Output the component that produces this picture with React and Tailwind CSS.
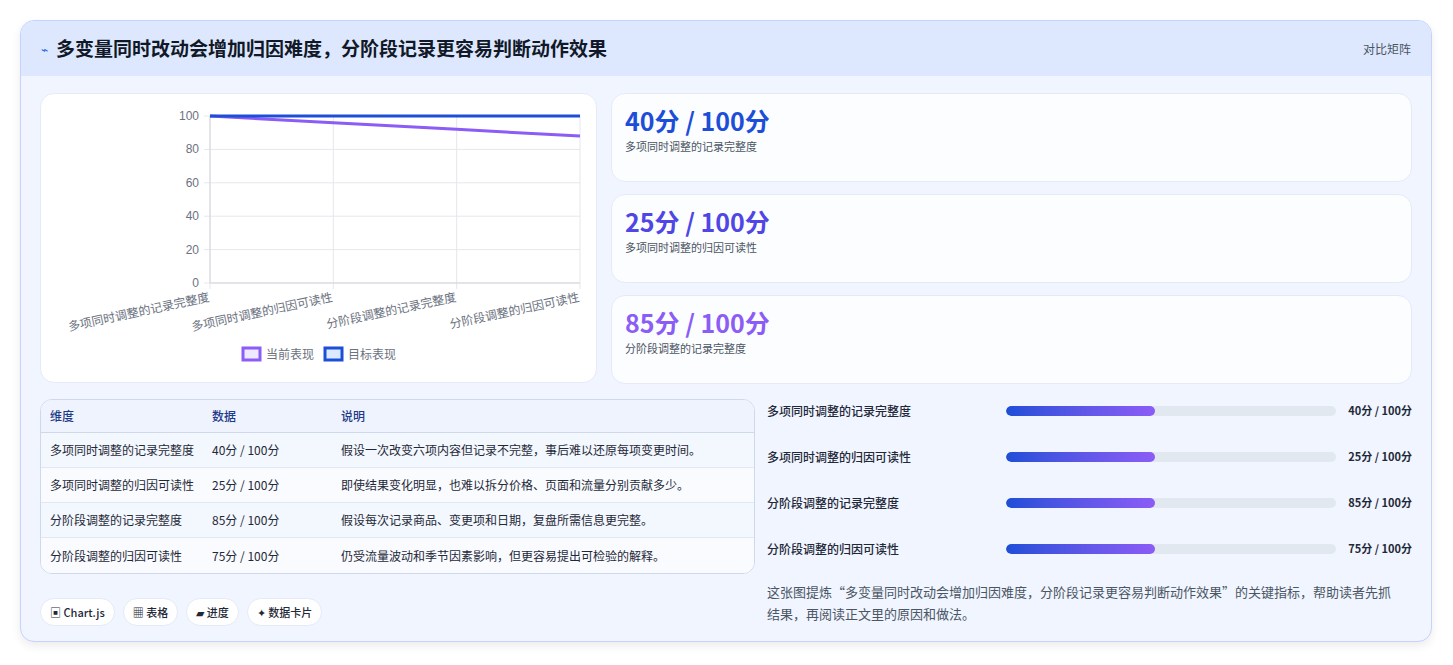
import React from "react";

const F = { fontFamily: '"Noto Sans CJK SC", "Noto Sans", sans-serif' };

function Chart() {
  const x0 = 169, x1 = 539, y0 = 22, y1 = 189;
  const xs = [0, 1, 2, 3].map(i => x0 + (i * (x1 - x0)) / 3);
  const y = v => y1 - (v / 100) * (y1 - y0);
  const cur = [100, 96, 92, 88];
  const labels = ["多项同时调整的记录完整度", "多项同时调整的归因可读性", "分阶段调整的记录完整度", "分阶段调整的归因可读性"];
  return (
    <svg width="557" height="290" className="block">
      {[0, 20, 40, 60, 80, 100].map(v => (
        <g key={v}>
          <line x1={x0 - 6} x2={x1} y1={y(v)} y2={y(v)} stroke="#e5e7eb" />
          <text x={x0 - 11} y={y(v) + 4} textAnchor="end" fontSize="12" fill="#6b7280" fontFamily="Liberation Sans, sans-serif">{v}</text>
        </g>
      ))}
      {xs.map((x, i) => <line key={i} x1={x} x2={x} y1={y0} y2={y1 + 6} stroke="#e5e7eb" />)}
      <line x1={x0} x2={x0} y1={y0} y2={y1} stroke="#d1d5db" />
      <line x1={x0} x2={x1} y1={y1} y2={y1} stroke="#d1d5db" />
      <polyline points={xs.map((x, i) => `${x},${y(cur[i])}`).join(" ")} fill="none" stroke="#8b5cf6" strokeWidth="3" />
      <polyline points={xs.map(x => `${x},${y(100)}`).join(" ")} fill="none" stroke="#1d4ed8" strokeWidth="3" />
      {labels.map((l, i) => (
        <text key={i} x={xs[i]} y={y1 + 18} textAnchor="end" fontSize="12" fill="#6b7280" transform={`rotate(-12 ${xs[i]} ${y1 + 18})`} style={F}>{l}</text>
      ))}
      <rect x="202" y="254" width="17" height="12" fill="#ede9fe" stroke="#8b5cf6" strokeWidth="3" />
      <text x="225" y="265" fontSize="12" fill="#6b7280" style={F}>当前表现</text>
      <rect x="284" y="254" width="17" height="12" fill="#dbeafe" stroke="#1d4ed8" strokeWidth="3" />
      <text x="307" y="265" fontSize="12" fill="#6b7280" style={F}>目标表现</text>
    </svg>
  );
}

const kpis = [
  ["40分 / 100分", "多项同时调整的记录完整度", "text-[#1d4ed8]"],
  ["25分 / 100分", "多项同时调整的归因可读性", "text-[#4f46e5]"],
  ["85分 / 100分", "分阶段调整的记录完整度", "text-[#8b5cf6]"],
];
const rows = [
  ["多项同时调整的记录完整度", "40分 / 100分", "假设一次改变六项内容但记录不完整，事后难以还原每项变更时间。"],
  ["多项同时调整的归因可读性", "25分 / 100分", "即使结果变化明显，也难以拆分价格、页面和流量分别贡献多少。"],
  ["分阶段调整的记录完整度", "85分 / 100分", "假设每次记录商品、变更项和日期，复盘所需信息更完整。"],
  ["分阶段调整的归因可读性", "75分 / 100分", "仍受流量波动和季节因素影响，但更容易提出可检验的解释。"],
];

export default function App() {
  return (
    <div className="w-[1453px] h-[665px] bg-white pt-[20px] pl-[20px]" style={F}>
      <div className="w-[1412px] h-[622px] rounded-[14px] border border-[#c7d2fe] bg-[#f0f5ff] overflow-hidden shadow-[0_4px_10px_rgba(0,0,0,0.08)]">
        <div className="h-[55px] bg-[#dde8fe] flex items-center justify-between pl-[20px] pr-[20px]">
          <div className="flex items-center gap-[8px]">
            <span className="text-[#2563eb] text-[12px]">⌁</span>
            <span className="text-[19px] font-bold text-[#111827]">多变量同时改动会增加归因难度，分阶段记录更容易判断动作效果</span>
          </div>
          <span className="text-[12px] text-[#4b5563]">对比矩阵</span>
        </div>
        <div className="px-[19px] pt-[17px] flex gap-[14px]">
          <div className="w-[557px] h-[290px] bg-white rounded-[14px] border border-[#e5eaf5]">
            <Chart />
          </div>
          <div className="flex-1 flex flex-col gap-[12px]">
            {kpis.map(([v, l, c]) => (
              <div key={l} className="h-[89px] bg-[#fcfdff] rounded-[14px] border border-[#e5eaf5] px-[13px] pt-[8px]">
                <div className={`text-[25px] font-bold leading-[36px] ${c}`}>{v}</div>
                <div className="text-[11px] text-[#4b5563]">{l}</div>
              </div>
            ))}
          </div>
        </div>
        <div className="px-[19px] pt-[15px] flex gap-[12px]">
          <div className="w-[715px]">
            <div className="rounded-[12px] border border-[#cfd8ec] overflow-hidden bg-white text-[12px]">
              <div className="flex h-[33px] items-center bg-[#eef3fd] border-b border-[#cfd8ec] text-[#1e3a8a] font-medium">
                <div className="w-[171px] pl-[9px]">维度</div><div className="w-[129px]">数据</div><div>说明</div>
              </div>
              {rows.map((r, i) => (
                <div key={i} className={`flex h-[35px] items-center text-[#1f2937] ${i % 2 ? "bg-[#f9fbff]" : "bg-[#f3f7fe]"} ${i < 3 ? "border-b border-[#e2e8f3]" : ""}`}>
                  <div className="w-[171px] pl-[9px]">{r[0]}</div><div className="w-[129px]">{r[1]}</div><div>{r[2]}</div>
                </div>
              ))}
            </div>
            <div className="flex gap-[8px] mt-[24px] text-[11px] text-[#1f2937] font-medium">
              {["▣ Chart.js", "▦ 表格", "▰ 进度", "✦ 数据卡片"].map(t => (
                <span key={t} className="h-[28px] px-[9px] flex items-center rounded-full bg-white border border-[#e5eaf5]">{t}</span>
              ))}
            </div>
          </div>
          <div className="flex-1">
            {rows.map((r, i) => (
              <div key={i} className="h-[46px] flex items-start pt-[3px] text-[12px]">
                <div className="w-[239px] text-[#1f2937] font-medium">{r[0]}</div>
                <div className="w-[330px] h-[10px] mt-[4px] rounded-full bg-[#e2e8f0] overflow-hidden">
                  <div className="h-full rounded-full bg-gradient-to-r from-[#1d4ed8] to-[#8b5cf6]" style={{ width: "45%" }} />
                </div>
                <div className="flex-1 text-right font-bold text-[#1f2937] text-[11px]">{r[1]}</div>
              </div>
            ))}
            <p className="text-[13px] leading-[22px] text-[#4b5563] mt-[-2px] pr-[20px]">这张图提炼“多变量同时改动会增加归因难度，分阶段记录更容易判断动作效果”的关键指标，帮助读者先抓结果，再阅读正文里的原因和做法。</p>
          </div>
        </div>
      </div>
    </div>
  );
}
